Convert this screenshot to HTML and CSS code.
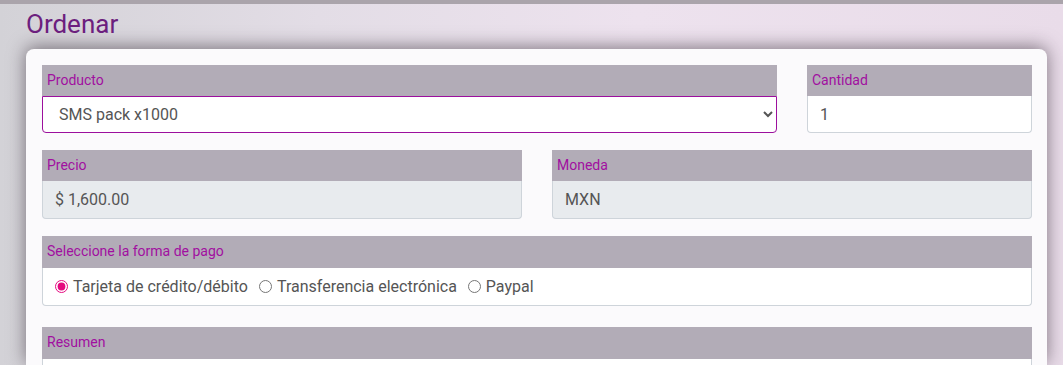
FILE: index.html
```html
<!DOCTYPE html>
<html lang="es">
<head>
  <meta charset="UTF-8" />
  <meta name="viewport" content="width=device-width, initial-scale=1.0"/>
  <title>Ordenar</title>
  <link rel="stylesheet" href="styles.css">
</head>
<body>
  <div class="page">
    <h1 class="title">Ordenar</h1>

    <div class="card">
      <div class="row">
        <div class="field col-9">
          <label class="field-label" for="producto">Producto</label>
          <select id="producto" class="field-input field-select">
            <option>SMS pack x1000</option>
            <option>SMS pack x5000</option>
          </select>
        </div>
        <div class="field col-3">
          <label class="field-label" for="cantidad">Cantidad</label>
          <input id="cantidad" class="field-input" type="number" value="1" />
        </div>
      </div>

      <div class="row">
        <div class="field col-6">
          <label class="field-label">Precio</label>
          <div class="field-input readonly">$ 1,600.00</div>
        </div>
        <div class="field col-6">
          <label class="field-label">Moneda</label>
          <div class="field-input readonly">MXN</div>
        </div>
      </div>

      <div class="row row-pago">
        <div class="field col-12">
          <label class="field-label tall">Seleccione la forma de pago</label>
          <div class="field-input radios">
            <label class="radio"><input type="radio" name="pago" checked /> Tarjeta de crédito/débito</label>
            <label class="radio"><input type="radio" name="pago" /> Transferencia electrónica</label>
            <label class="radio"><input type="radio" name="pago" /> Paypal</label>
          </div>
        </div>
      </div>

      <div class="row">
        <div class="field col-12">
          <label class="field-label tall">Resumen</label>
          <div class="field-input resumen"></div>
        </div>
      </div>
    </div>
  </div>
</body>
</html>
```

FILE: styles.css
```css
body {
  margin: 0;
  font-family: Roboto, 'Liberation Sans', sans-serif;
  background: linear-gradient(to right, #d3d2d7 0%, #e3dde6 30%, #ede2ee 60%, #e9dce9 100%);
  height: 365px;
  overflow: hidden;
}

.page {
  border-top: 4px solid #aaa4ab;
  padding: 0 16px 0 26px;
}

.title {
  margin: 0;
  height: 45px;
  line-height: 40px;
  font-size: 26px;
  font-weight: 400;
  color: #6c1f7e;
}

.card {
  background: #fbfafc;
  border-radius: 8px 8px 0 0;
  padding: 16px 15px 0 16px;
  height: 300px;
  box-shadow: 0 -2px 18px rgba(40, 30, 40, 0.55);
}

.row {
  display: flex;
  gap: 30px;
  margin-bottom: 17px;
}

.row-pago {
  margin-bottom: 21px;
}

.col-9 { width: 735px; }
.col-3 { width: 225px; }
.col-6 { width: 480px; }
.col-12 { width: 990px; }

.field {
  display: flex;
  flex-direction: column;
}

.field-label {
  background: #b2acb7;
  color: #a10fa0;
  font-size: 14px;
  height: 31px;
  line-height: 30px;
  padding-left: 5px;
}

.field-label.tall {
  height: 32px;
  line-height: 31px;
}

.field-input {
  box-sizing: border-box;
  height: 37px;
  border: 1px solid #ced4da;
  border-top: none;
  border-radius: 0 0 4px 4px;
  background: #fff;
  font-family: inherit;
  font-size: 16px;
  color: #555;
  padding: 0 12px;
  display: flex;
  align-items: center;
  margin: 0;
  outline: none;
}

.field-select {
  border: 1px solid #9c0f9d;
  padding: 0 12px 0 12px;
  color: #555;
}

.readonly {
  background: #e8ebee;
  height: 38px;
}

.radios {
  height: 38px;
  gap: 11px;
  padding: 0 12px;
  font-size: 16px;
}

.radio {
  display: flex;
  align-items: center;
  gap: 5px;
}

.radio input {
  margin: 0;
  width: 13px;
  height: 13px;
  accent-color: #e5097f;
}

.resumen {
  height: 20px;
}
```
